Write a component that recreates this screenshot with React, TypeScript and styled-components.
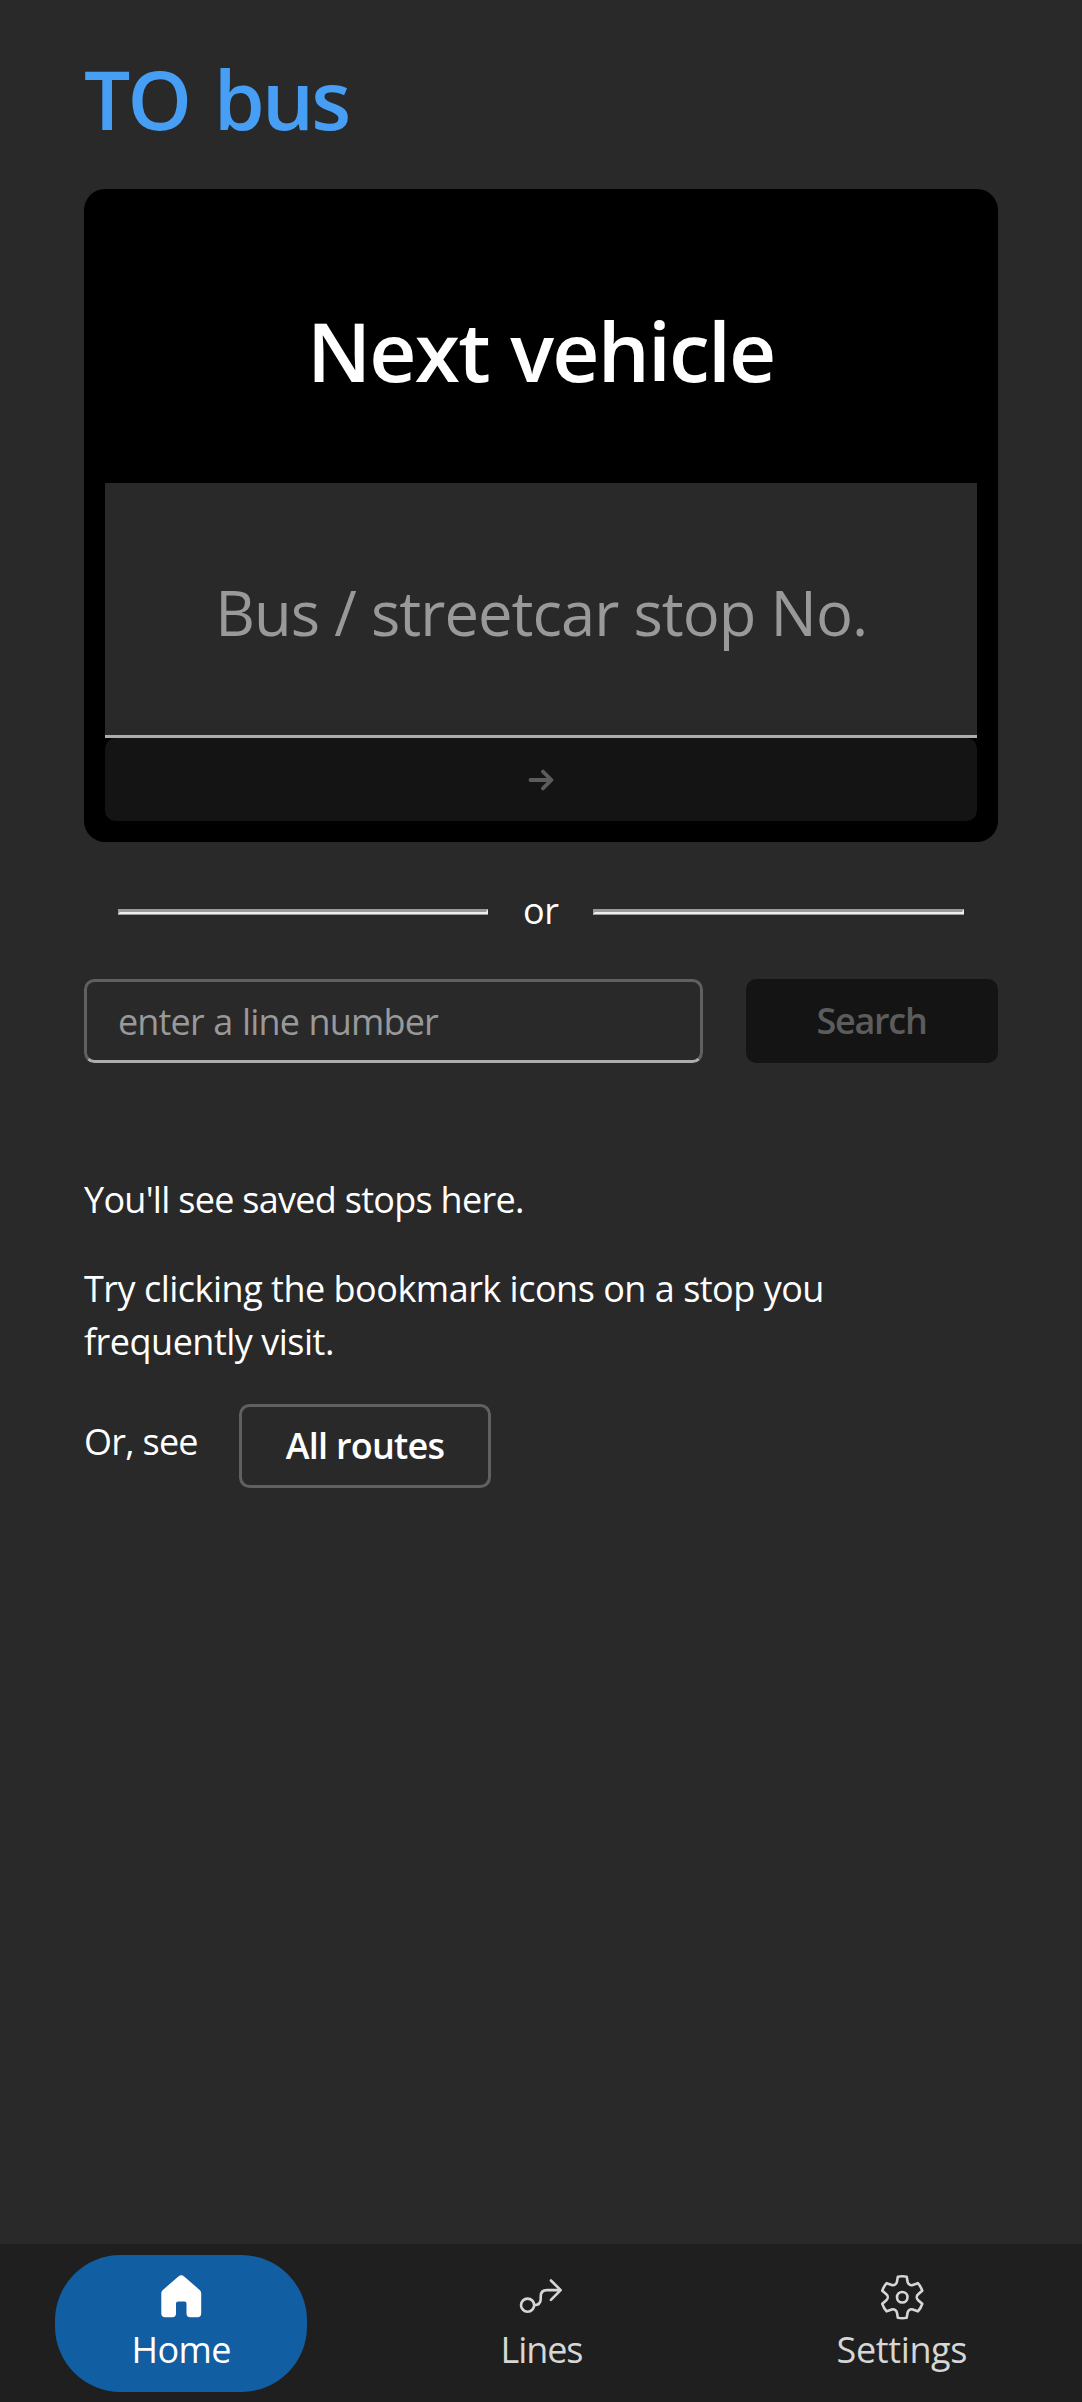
import React from "react";
import styled, { createGlobalStyle } from "styled-components";

const GlobalStyle = createGlobalStyle`
  *, *::before, *::after { box-sizing: border-box; }
  body {
    margin: 0;
    background: #292929;
    color: #fff;
    font-family: "Open Sans", "Noto Sans", sans-serif;
    font-size: 36px;
    line-height: 52.5px;
  }
  button, input { font: inherit; color: inherit; margin: 0; }
`;

const Page = styled.div`
  display: flex;
  flex-direction: column;
  height: 2402px;
  width: 1082px;
`;

const Main = styled.main`
  flex: 1;
  padding: 43px 84.5px 0 84px;
`;

const Title = styled.h1`
  margin: 0 0 36px;
  color: #479ef5;
  font-size: 82px;
  font-weight: 600;
  line-height: 110px;
  letter-spacing: -2.8px;
  word-spacing: 6px;
`;

const Card = styled.section`
  display: flex;
  flex-direction: column;
  height: 653px;
  padding: 21px;
  border-radius: 21px;
  background: #000;
`;

const CardTitle = styled.h2`
  display: flex;
  align-items: center;
  justify-content: center;
  height: 273px;
  margin: 0;
  padding-top: 7px;
  font-size: 82px;
  font-weight: 600;
  letter-spacing: -1.8px;
  word-spacing: 2px;
`;

const StopInput = styled.input`
  width: 100%;
  height: 255px;
  padding: 6px 0 0 1px;
  border: 0;
  border-bottom: 3px solid #adadad;
  border-radius: 0;
  outline: none;
  background: #292929;
  font-size: 61.5px;
  letter-spacing: -0.95px;
  text-align: center;
  &::placeholder { color: #999; opacity: 1; }
`;

const Button = styled.button<{ $outlined?: boolean; $wide?: boolean; $spacing?: number }>`
  display: flex;
  align-items: center;
  justify-content: center;
  width: ${(p) => (p.$wide ? "100%" : "252px")};
  height: ${(p) => (p.$wide ? 83 : 84)}px;
  padding: ${(p) => (p.$outlined ? 1 : 0)}px 0 0;
  border: ${(p) => (p.$outlined ? "3px solid #606060" : "0")};
  border-radius: 10.5px;
  background: ${(p) => (p.$outlined ? "transparent" : "#141414")};
  color: ${(p) => (p.$outlined ? "#fff" : "#5c5c5c")};
  font-weight: 600;
  letter-spacing: ${(p) => p.$spacing ?? 0}px;
`;

const Separator = styled.div`
  display: flex;
  align-items: center;
  height: 52px;
  margin: 43px 34px 42px;
`;

const Rule = styled.hr`
  flex: 1;
  height: 5px;
  margin: 0;
  border-style: solid;
  border-width: 3px 2px 2px;
  border-color: #9a9a9a #eee #eee #9a9a9a;
  box-shadow: 0 1px 0 #9a9a9a;
`;

const Or = styled.span`
  width: 105px;
  padding-top: 1px;
  text-align: center;
  letter-spacing: -0.4px;
`;

const SearchRow = styled.form`
  display: flex;
  justify-content: space-between;
`;

const LineInput = styled.input`
  width: 619px;
  height: 84px;
  padding: 0 31px;
  border: 3px solid #606060;
  border-bottom-color: #adadad;
  border-radius: 10.5px;
  outline: none;
  background: transparent;
  letter-spacing: -0.85px;
  word-spacing: 1px;
  &::placeholder { color: #999; opacity: 1; }
`;

const Saved = styled.section`
  display: flex;
  flex-direction: column;
  gap: 36.75px;
  margin-top: 111px;
`;

const Paragraph = styled.p<{ $spacing: number }>`
  margin: 0;
  letter-spacing: ${(p) => p.$spacing}px;
`;

const RoutesRow = styled.div`
  display: flex;
  align-items: center;
  gap: 41px;
  margin-top: -1.5px;
`;

const RoutesLabel = styled.span`
  width: 114px;
  padding-bottom: 6px;
  white-space: nowrap;
  letter-spacing: -0.73px;
`;

const Nav = styled.nav`
  display: grid;
  grid-template-columns: repeat(3, 1fr);
  align-items: center;
  justify-items: center;
  height: 158px;
  padding-left: 1px;
  background: #1f1f1f;
`;

const NavItem = styled.a<{ $active?: boolean; $spacing: number }>`
  display: flex;
  flex-direction: column;
  align-items: center;
  justify-content: center;
  width: 252px;
  height: 137px;
  border-radius: 65.6px;
  background: ${(p) => (p.$active ? "#115ea3" : "transparent")};
  color: ${(p) => (p.$active ? "#fff" : "#d6d6d6")};
  letter-spacing: ${(p) => p.$spacing}px;
`;

const NavLabel = styled.span`
  height: 52.5px;
  padding-top: 1px;
`;

const Icon = styled.svg`
  display: block;
  width: 52.5px;
  height: 52.5px;
`;

const ArrowIcon = () => (
  <svg width="26" height="24" viewBox="0 0 26 24" fill="none" stroke="currentColor" strokeWidth="3.8" strokeLinecap="round" strokeLinejoin="round">
    <path d="M2.5 12H23M15 3.6L23.4 12L15 20.4" />
  </svg>
);

const HomeIcon = () => (
  <Icon viewBox="0 0 20 20" fill="currentColor">
    <path d="M8.9 2.1a1.6 1.6 0 0 1 2.2 0l5.9 5.1c.4.35.6.8.6 1.3v7.7a1.4 1.4 0 0 1-1.4 1.4h-2.8a1.4 1.4 0 0 1-1.4-1.4v-3.8a.8.8 0 0 0-.8-.8H8.8a.8.8 0 0 0-.8.8v3.8a1.4 1.4 0 0 1-1.4 1.4H3.8a1.4 1.4 0 0 1-1.4-1.4V8.5c0-.5.2-.95.6-1.3z" />
  </Icon>
);

const LinesIcon = () => (
  <Icon viewBox="0 0 20 20" fill="none" stroke="currentColor" strokeLinecap="round" strokeLinejoin="round">
    <circle cx="4.8" cy="13" r="2.5" />
    <path d="M7.3 13c1.8 0 2.5-.8 2.5-2.3V9.6c0-1.5.8-2.3 2.4-2.3h5.1M13.7 3.6l3.7 3.7-3.7 3.7" />
  </Icon>
);

const SettingsIcon = () => (
  <Icon viewBox="0 0 20 20" fill="currentColor">
    <path d="M1.91 7.38A8.5 8.5 0 0 1 3.7 4.3a.5.5 0 0 1 .54-.13l1.92.68a1 1 0 0 0 1.32-.76l.36-2a.5.5 0 0 1 .4-.4 8.53 8.53 0 0 1 3.55 0c.2.04.35.2.38.4l.37 2a1 1 0 0 0 1.32.76l1.92-.68a.5.5 0 0 1 .54.13 8.5 8.5 0 0 1 1.78 3.08c.06.2 0 .4-.15.54l-1.56 1.32a1 1 0 0 0 0 1.52l1.56 1.32a.5.5 0 0 1 .15.54 8.5 8.5 0 0 1-1.78 3.08.5.5 0 0 1-.54.13l-1.92-.68a1 1 0 0 0-1.32.76l-.37 2a.5.5 0 0 1-.38.4 8.53 8.53 0 0 1-3.56 0 .5.5 0 0 1-.39-.4l-.36-2a1 1 0 0 0-1.32-.76l-1.92.68a.5.5 0 0 1-.54-.13 8.5 8.5 0 0 1-1.78-3.08.5.5 0 0 1 .15-.54l1.56-1.32a1 1 0 0 0 0-1.52L2.06 7.92a.5.5 0 0 1-.15-.54Zm1.06 0 1.3 1.1a2 2 0 0 1 0 3.04l-1.3 1.1c.3.79.72 1.51 1.25 2.16l1.6-.58a2 2 0 0 1 2.63 1.53l.3 1.67a7.56 7.56 0 0 0 2.5 0l.3-1.67a2 2 0 0 1 2.64-1.53l1.6.58a7.5 7.5 0 0 0 1.24-2.16l-1.3-1.1a2 2 0 0 1 0-3.04l1.3-1.1a7.5 7.5 0 0 0-1.25-2.16l-1.6.58a2 2 0 0 1-2.63-1.53l-.3-1.67a7.55 7.55 0 0 0-2.5 0l-.3 1.67A2 2 0 0 1 5.81 5.8l-1.6-.58a7.5 7.5 0 0 0-1.24 2.16ZM7.5 10a2.5 2.5 0 1 1 5 0 2.5 2.5 0 0 1-5 0ZM10 8.5a1.5 1.5 0 1 0 0 3 1.5 1.5 0 0 0 0-3Z" />
  </Icon>
);

export default function App() {
  return (
    <Page>
      <GlobalStyle />
      <Main>
        <Title>TO bus</Title>
        <Card>
          <CardTitle>Next vehicle</CardTitle>
          <StopInput placeholder="Bus / streetcar stop No." />
          <Button $wide disabled aria-label="Go">
            <ArrowIcon />
          </Button>
        </Card>
        <Separator>
          <Rule />
          <Or>or</Or>
          <Rule />
        </Separator>
        <SearchRow>
          <LineInput placeholder="enter a line number" />
          <Button type="button" disabled $spacing={-1.28}>Search</Button>
        </SearchRow>
        <Saved>
          <Paragraph $spacing={-0.72}>You'll see saved stops here.</Paragraph>
          <Paragraph $spacing={-0.5}>
            Try clicking the bookmark icons on a stop you
            <br />
            frequently visit.
          </Paragraph>
          <RoutesRow>
            <RoutesLabel>Or, see</RoutesLabel>
            <Button $outlined $spacing={-0.78}>All routes</Button>
          </RoutesRow>
        </Saved>
      </Main>
      <Nav>
        <NavItem $active $spacing={-0.57}>
          <HomeIcon />
          <NavLabel>Home</NavLabel>
        </NavItem>
        <NavItem $spacing={-1.1}>
          <LinesIcon />
          <NavLabel>Lines</NavLabel>
        </NavItem>
        <NavItem $spacing={-0.38}>
          <SettingsIcon />
          <NavLabel>Settings</NavLabel>
        </NavItem>
      </Nav>
    </Page>
  );
}
